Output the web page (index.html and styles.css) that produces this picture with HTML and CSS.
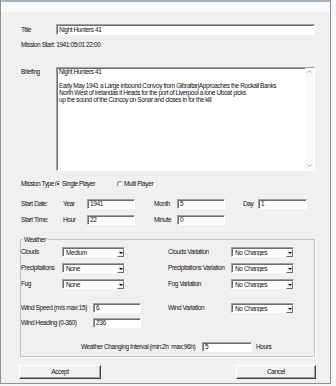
FILE: index.html
```html
<!DOCTYPE html>
<html lang="en">
<head>
    <meta charset="UTF-8">
    <meta name="viewport" content="width=device-width, initial-scale=1.0">
    <title>Mission Settings</title>
    <link rel="stylesheet" href="styles.css">
</head>
<body>
    <div class="window">
        <div class="caption"></div>
        <div class="content">
            <div class="row row-title">
                <span class="lbl head">Title</span>
                <div class="edit edit-title">Night Hunters 41</div>
            </div>

            <div class="start-info">Mission Start: 1941:05:01 22:00</div>

            <div class="row row-brief">
                <span class="lbl head brief-lbl">Briefing</span>
                <div class="memo">
                    <div class="memo-text">
                        Night Hunters 41<br>
                        <br>
                        Early May 1941 a Large inbound Convoy from Gibraltar|Approaches the Rockall Banks<br>
                        North West of Irelandas it Heads for the port of Liverpool a lone Uboat picks<br>
                        up the sound of the Concoy on Sonar and closes in for the kill
                    </div>
                    <div class="memo-scroll">
                        <svg width="5" height="3" viewBox="0 0 5 3"><polyline points="0.5,2.5 2.5,0.5 4.5,2.5" fill="none" stroke="#a8a8a8" stroke-width="1"/></svg>
                        <svg width="5" height="3" viewBox="0 0 5 3"><polyline points="0.5,0.5 2.5,2.5 4.5,0.5" fill="none" stroke="#a8a8a8" stroke-width="1"/></svg>
                    </div>
                </div>
            </div>

            <div class="row row-type">
                <span class="lbl type-lbl">Mission Type</span>
                <span class="opt opt-single"><span class="radio on"></span>Single Player</span>
                <span class="opt"><span class="radio"></span>Multi Player</span>
            </div>

            <div class="row row-dt first">
                <span class="lbl dt-head">Start Date:</span>
                <span class="lbl dt-lbl">Year</span>
                <div class="edit dt-edit">1941</div>
                <span class="lbl dt-lbl second">Month</span>
                <div class="edit dt-edit">5</div>
                <span class="lbl dt-lbl third">Day</span>
                <div class="edit dt-edit wide">1</div>
            </div>

            <div class="row row-dt">
                <span class="lbl dt-head">Start Time:</span>
                <span class="lbl dt-lbl">Hour</span>
                <div class="edit dt-edit">22</div>
                <span class="lbl dt-lbl second">Minute</span>
                <div class="edit dt-edit">0</div>
            </div>

            <fieldset class="weather">
                <legend>Weather</legend>

                <div class="row wx-row first">
                    <span class="lbl wx-lbl">Clouds</span>
                    <div class="combo"><span class="combo-val">Medium</span><span class="combo-btn"></span></div>
                    <span class="lbl wx-lbl var">Clouds Variation</span>
                    <div class="combo"><span class="combo-val">No Changes</span><span class="combo-btn"></span></div>
                </div>

                <div class="row wx-row">
                    <span class="lbl wx-lbl">Precipitations</span>
                    <div class="combo"><span class="combo-val">None</span><span class="combo-btn"></span></div>
                    <span class="lbl wx-lbl var">Precipitations Variation</span>
                    <div class="combo"><span class="combo-val">No Changes</span><span class="combo-btn"></span></div>
                </div>

                <div class="row wx-row">
                    <span class="lbl wx-lbl">Fog</span>
                    <div class="combo"><span class="combo-val">None</span><span class="combo-btn"></span></div>
                    <span class="lbl wx-lbl var">Fog Variation</span>
                    <div class="combo"><span class="combo-val">No Changes</span><span class="combo-btn"></span></div>
                </div>

                <div class="row wx-row gap">
                    <span class="lbl wx-lbl long">Wind Speed (m/s max:15)</span>
                    <div class="edit wind-edit">6</div>
                    <span class="lbl wx-lbl var wind-var">Wind Variation</span>
                    <div class="combo"><span class="combo-val">No Changes</span><span class="combo-btn"></span></div>
                </div>

                <div class="row wx-row heading">
                    <span class="lbl wx-lbl long">Wind Heading (0-360)</span>
                    <div class="edit wind-edit">236</div>
                </div>

                <div class="row wx-row gap interval">
                    <span class="lbl interval-lbl">Weather Changing Interval (min:2h&nbsp; max:96h)</span>
                    <div class="edit interval-edit">5</div>
                    <span class="lbl hours">Hours</span>
                </div>
            </fieldset>

            <div class="buttons">
                <button class="btn btn-accept">Accept</button>
                <button class="btn btn-cancel">Cancel</button>
            </div>
        </div>
    </div>
</body>
</html>
```

FILE: styles.css
```css
body {
    margin: 0;
    background: #f8f8f8;
    font-family: "Liberation Sans", Arial, sans-serif;
    font-size: 6.5px;
    letter-spacing: -0.4px;
    color: #111;
}
.window {
    width: 329px;
    border: 1px solid #8593a0;
    border-top: none;
    background: #f0f0f0;
}
.caption {
    height: 10px;
    background: #fbfbfb;
    border-top: 2px solid #aab3bb;
}
.content {
    padding: 0 0 4px 20px;
}
.row {
    display: flex;
    align-items: center;
}
.lbl {
    flex: none;
    line-height: 8px;
    white-space: nowrap;
}
.head {
    width: 35px;
}
.edit {
    box-sizing: border-box;
    background: #fff;
    border: 1px solid;
    border-color: #a0a0a0 #fff #fff #a0a0a0;
    box-shadow: inset 1px 1px #6d6d6d;
    padding-left: 2px;
    height: 10px;
    line-height: 8px;
    white-space: nowrap;
    overflow: hidden;
}
.row-title {
    margin-top: 12px;
    height: 11px;
}
.edit-title {
    width: 259px;
    height: 11px;
    line-height: 9px;
}
.start-info {
    margin-top: 6px;
    line-height: 8px;
    height: 8px;
}

/* briefing memo */
.row-brief {
    margin-top: 18px;
    align-items: flex-start;
}
.brief-lbl {
    margin-top: 1px;
}
.memo {
    box-sizing: border-box;
    width: 259px;
    height: 104px;
    display: flex;
    background: #fff;
    border: 1px solid;
    border-color: #a0a0a0 #fff #fff #a0a0a0;
    box-shadow: inset 1px 1px #6d6d6d;
}
.memo-text {
    flex: 1;
    padding: 0 0 0 2px;
    line-height: 7px;
    white-space: nowrap;
    overflow: hidden;
}
.memo-scroll {
    width: 9px;
    display: flex;
    flex-direction: column;
    justify-content: space-between;
    align-items: center;
    padding: 2px 0 3px;
    background: #fafafa;
}

/* mission type */
.row-type {
    margin-top: 9px;
    height: 8px;
}
.type-lbl {
    width: 34px;
}
.opt {
    display: flex;
    align-items: center;
    gap: 1px;
    line-height: 8px;
    white-space: nowrap;
}
.opt-single {
    width: 62px;
}
.radio {
    box-sizing: border-box;
    width: 6px;
    height: 6px;
    border-radius: 50%;
    border: 1px solid;
    border-color: #808080 #e8e8e8 #e8e8e8 #808080;
    background: #fff;
    display: flex;
    align-items: center;
    justify-content: center;
}
.radio.on::after {
    content: "";
    width: 2px;
    height: 2px;
    border-radius: 50%;
    background: #000;
}

/* date and time */
.row-dt {
    margin-top: 6px;
    height: 10px;
}
.row-dt.first {
    margin-top: 11px;
}
.dt-head {
    width: 42px;
}
.dt-lbl {
    width: 24px;
}
.dt-lbl.second {
    margin-left: 19px;
    width: 23px;
}
.dt-lbl.third {
    margin-left: 18px;
    width: 15px;
}
.dt-edit {
    width: 48px;
}
.dt-edit.wide {
    width: 49px;
}

/* weather group */
.weather {
    margin: 10px 0 0 -1px;
    padding: 0 0 4px 0;
    width: 293px;
    min-width: 0;
    border: 1px solid #c4c4c4;
    box-shadow: 1px 1px 0 #fff;
}
.weather legend {
    margin-left: 2px;
    padding: 0 1px;
    line-height: 9px;
}
.wx-row {
    margin-top: 6px;
    height: 10px;
}
.wx-row.first {
    margin-top: 3px;
}
.wx-row.gap {
    margin-top: 14px;
}
.wx-row.heading {
    margin-top: 5px;
}
.wx-lbl {
    width: 41px;
}
.wx-lbl.var {
    margin-left: 43px;
    width: 63px;
}
.wx-lbl.long {
    width: 72px;
}
.wx-lbl.var.wind-var {
    margin-left: 27px;
}
.wind-edit {
    width: 48px;
}
.combo {
    box-sizing: border-box;
    width: 63px;
    height: 10px;
    display: flex;
    background: #fff;
    border: 1px solid;
    border-color: #a0a0a0 #fff #fff #a0a0a0;
    box-shadow: inset 1px 1px #6d6d6d;
    padding: 1px 0 0 1px;
}
.combo-val {
    flex: 1;
    padding-left: 2px;
    line-height: 7px;
    white-space: nowrap;
    overflow: hidden;
}
.combo-btn {
    box-sizing: border-box;
    width: 7px;
    height: 8px;
    background: #f0f0f0;
    border: 1px solid;
    border-color: #fff #6d6d6d #6d6d6d #fff;
    display: flex;
    align-items: center;
    justify-content: center;
}
.combo-btn::after {
    content: "";
    border-left: 2px solid transparent;
    border-right: 2px solid transparent;
    border-top: 2px solid #000;
}
.interval {
    margin-left: 60px;
}
.interval-lbl {
    width: 121px;
}
.interval-edit {
    width: 50px;
}
.hours {
    margin-left: 4px;
}

/* buttons */
.buttons {
    display: flex;
    justify-content: space-between;
    width: 297px;
    margin: 8px 0 0 -2px;
}
.btn {
    box-sizing: border-box;
    height: 14px;
    padding: 0;
    font: inherit;
    letter-spacing: inherit;
    color: #111;
    background: #f0f0f0;
    border: 1px solid;
    border-color: #fff #404040 #404040 #fff;
    box-shadow: inset -1px -1px #a0a0a0;
    line-height: 12px;
}
.btn-accept {
    width: 82px;
}
.btn-cancel {
    width: 80px;
}
```
